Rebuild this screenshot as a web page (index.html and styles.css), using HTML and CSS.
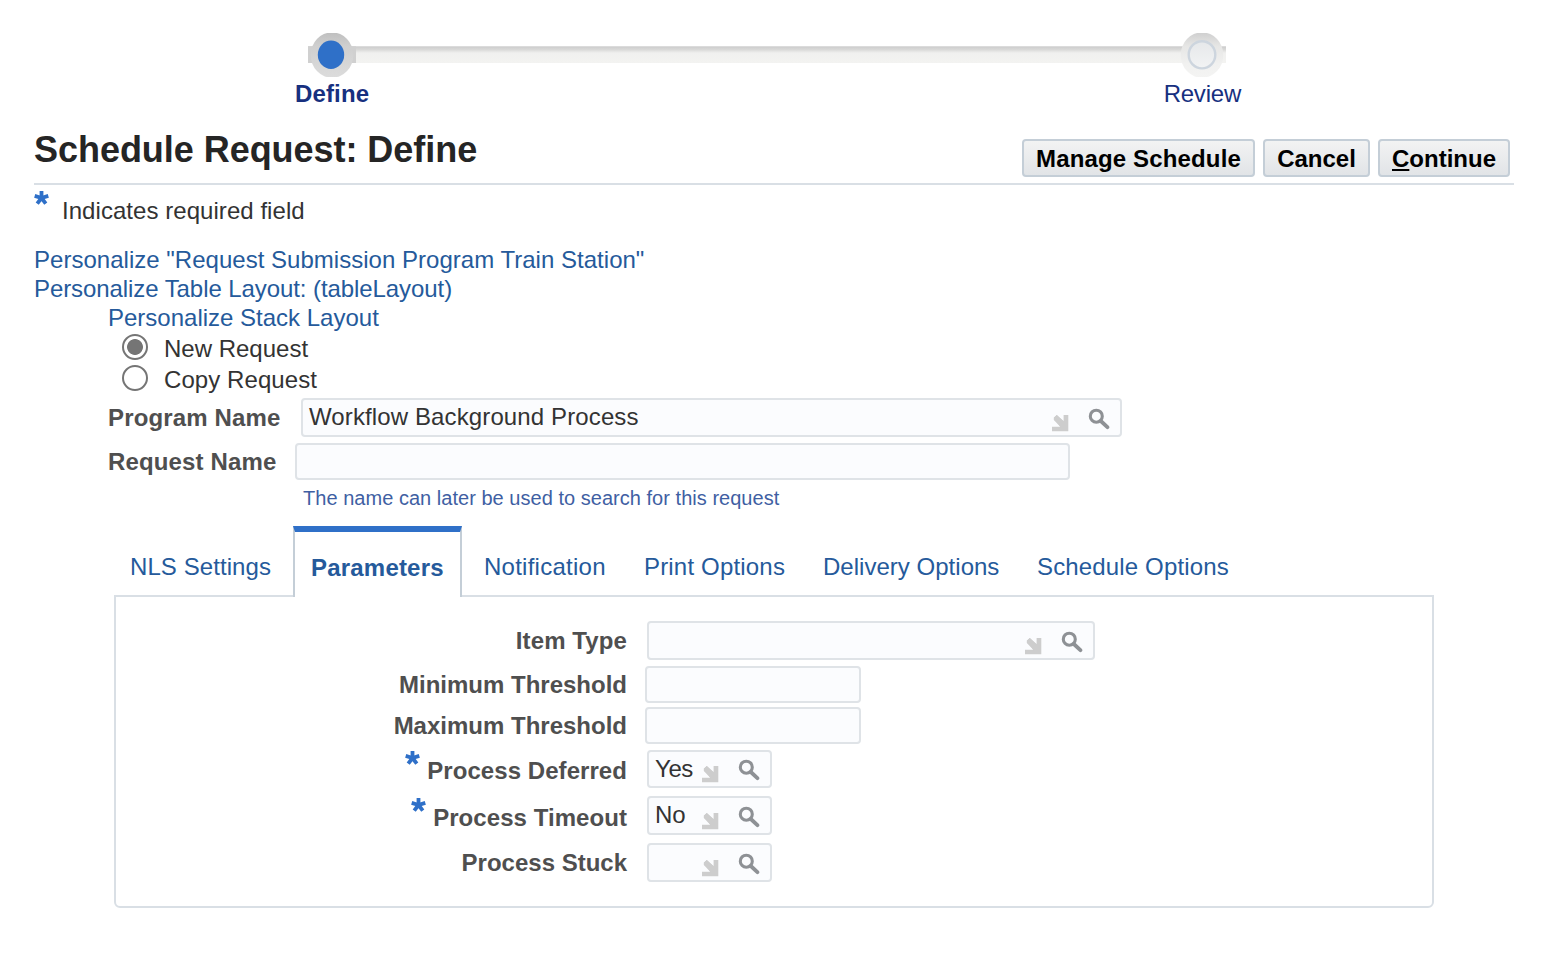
FILE: index.html
```html
<!DOCTYPE html>
<html lang="en">
<head>
<meta charset="utf-8">
<title>Schedule Request: Define</title>
<link rel="stylesheet" href="styles.css">
</head>
<body>
<svg class="defs" width="0" height="0">
  <defs>
    <symbol id="lov" viewBox="0 0 58 24">
      <path d="M1.8 9.8 4.8 6.9 11.6 13V7h4.7v16.3H0v-4.6h8.2Z" fill="#cdcdcd"/>
      <path d="M1.8 9.8 4.8 6.9 13 15v5H9.5L1.8 12Z" fill="#cdcdcd"/>
      <circle cx="44.3" cy="8.2" r="6" fill="none" stroke="#8e9195" stroke-width="3.1"/>
      <path d="M48.8 13 55.4 19.2" stroke="#8e9195" stroke-width="3.8" stroke-linecap="round"/>
    </symbol>
    <symbol id="star" viewBox="0 0 15 15">
      <path d="M7.5 7V0M7.5 7 .7 4.9M7.5 7l6.8-2.1M7.5 7l-4.3 5.7M7.5 7l4.3 5.7" stroke="#2f70c8" stroke-width="3.8"/>
    </symbol>
  </defs>
</svg>
<nav class="train">
  <svg class="track" width="918" height="44" viewBox="0 0 918 44">
    <defs>
      <linearGradient id="bar" x1="0" y1="0" x2="0" y2="1"><stop offset="0" stop-color="#cbcbcb"/><stop offset=".2" stop-color="#d9d9d8"/><stop offset=".4" stop-color="#f0f0ef"/><stop offset="1" stop-color="#f3f3f1"/></linearGradient>
      <linearGradient id="on" x1="0" y1="0" x2="0" y2="1"><stop offset="0" stop-color="#bfbfbf"/><stop offset=".3" stop-color="#cfcfcf"/><stop offset="1" stop-color="#dcdcdc"/></linearGradient>
      <linearGradient id="off" x1="0" y1="0" x2="0" y2="1"><stop offset="0" stop-color="#cfcfcf"/><stop offset=".3" stop-color="#e6e6e5"/><stop offset=".7" stop-color="#f1f1f0"/><stop offset="1" stop-color="#f4f4f3"/></linearGradient>
      <linearGradient id="knob" x1="0" y1="0" x2="0" y2="1"><stop offset="0" stop-color="#e6e8ea"/><stop offset="1" stop-color="#f2f3f4"/></linearGradient>
    </defs>
    <rect x="0" y="13.3" width="918" height="16.7" fill="url(#bar)"/>
    <rect x="0" y="13.3" width="48" height="16.7" fill="#d0d0d0"/>
    <ellipse cx="24" cy="22" rx="21.3" ry="22.6" fill="url(#on)"/>
    <ellipse cx="23" cy="21.8" rx="13.2" ry="14.2" fill="#2f70c8"/>
    <ellipse cx="894" cy="22" rx="21.3" ry="22.6" fill="url(#off)"/>
    <ellipse cx="894" cy="21.8" rx="13.3" ry="13.6" fill="url(#knob)" stroke="#cdd5de" stroke-width="2.4"/>
  </svg>
  <div class="stations"><b>Define</b><span>Review</span></div>
</nav>
<header class="head">
  <h1>Schedule Request: Define</h1>
  <div class="actions">
    <div class="btn manage">Manage Schedule</div>
    <div class="btn cancel">Cancel</div>
    <div class="btn continue"><u>C</u>ontinue</div>
  </div>
</header>
<p class="required"><svg width="15" height="15"><use href="#star"/></svg><span>Indicates required field</span></p>
<div class="links">
  <a>Personalize "Request Submission Program Train Station"</a>
  <a class="table-layout">Personalize Table Layout: (tableLayout)</a>
  <a class="indent">Personalize Stack Layout</a>
</div>
<div class="radios">
  <div class="radio"><i class="dot on"></i><span>New Request</span></div>
  <div class="radio"><i class="dot"></i><span class="copy">Copy Request</span></div>
</div>
<div class="row program"><b class="label">Program Name</b><div class="field"><span>Workflow Background Process</span><svg width="58" height="24"><use href="#lov"/></svg></div></div>
<div class="row request"><b class="label">Request Name</b><div class="field"></div></div>
<p class="hint">The name can later be used to search for this request</p>
<div class="tabs">
  <a class="tab nls">NLS Settings</a>
  <a class="tab active">Parameters</a>
  <a class="tab notification">Notification</a>
  <a class="tab print">Print Options</a>
  <a class="tab delivery">Delivery Options</a>
  <a class="tab schedule">Schedule Options</a>
</div>
<main class="panel">
  <div class="param item"><b class="label">Item Type</b><div class="field"><svg width="58" height="24"><use href="#lov"/></svg></div></div>
  <div class="param minimum"><b class="label">Minimum Threshold</b><div class="field"></div></div>
  <div class="param maximum"><b class="label">Maximum Threshold</b><div class="field"></div></div>
  <div class="param deferred"><b class="label"><svg width="15" height="15"><use href="#star"/></svg>Process Deferred</b><div class="field"><span class="yes">Yes</span><svg width="58" height="24"><use href="#lov"/></svg></div></div>
  <div class="param timeout"><b class="label"><svg width="15" height="15"><use href="#star"/></svg>Process Timeout</b><div class="field"><span>No</span><svg width="58" height="24"><use href="#lov"/></svg></div></div>
  <div class="param stuck"><b class="label">Process Stuck</b><div class="field"><svg width="58" height="24"><use href="#lov"/></svg></div></div>
</main>
</body>
</html>
```
FILE: styles.css
```css
* { box-sizing: border-box; }
body { margin: 0; width: 1548px; height: 976px; overflow: hidden; background: #fff; color: #333; font: 24px/28px "Liberation Sans", Arial, sans-serif; white-space: nowrap; }
p, h1 { margin: 0; }
svg { display: block; flex: none; }
.defs { position: absolute; }

.train { height: 108px; padding: 33px 0 0 308px; }
.stations { display: flex; justify-content: space-between; width: 946px; margin: 3px 0 0 -13px; color: #17307f; }
.stations b { letter-spacing: .15px; }
.stations span { letter-spacing: -.22px; }

.head { display: flex; justify-content: space-between; height: 77px; margin: 0 34px; border-bottom: 2px solid #d9dfe5; }
h1 { padding-top: 22px; font-size: 36px; line-height: 40px; letter-spacing: -.04px; color: #252525; }
.actions { display: flex; gap: 8px; padding: 31px 4px 0 0; }
.btn { height: 38px; padding-top: 4px; border: 2px solid #c4ced7; border-radius: 4px; background: linear-gradient(#f2f3f3, #e1e4e7); color: #000; font-weight: bold; text-align: center; }
.manage { width: 233px; letter-spacing: .15px; }
.cancel { width: 107px; }
.continue { width: 132px; }

.required { display: flex; height: 60px; padding: 6px 0 0 34px; letter-spacing: .05px; }
.required span { padding: 6px 0 0 13px; }
.links { padding-left: 34px; color: #255a9b; }
.links a { display: block; line-height: 29px; letter-spacing: .02px; }
.links .table-layout { letter-spacing: -.08px; }
.links .indent { padding-left: 74px; letter-spacing: 0; }
.radios { padding: 2px 0 0 122px; }
.radio { display: flex; height: 31px; }
.radio span { padding: 1px 0 0 16px; }
.radio .copy { letter-spacing: .08px; }
.dot { width: 26px; height: 26px; border: 2px solid #757575; border-radius: 50%; }
.dot.on { background: radial-gradient(circle, #757575 7.5px, #fff 8.3px); }

.label { color: #4f4f4f; }
.field { display: flex; height: 39px; padding: 3px 0 0 6px; border: 2px solid #dfe3e7; border-radius: 4px; background: #fbfcfe; }
.field svg { margin: 5px 10px 0 auto; }
.row { display: flex; padding-left: 108px; }
.row .label { flex: none; letter-spacing: .15px; }
.program { height: 47px; padding-top: 2px; }
.program .label { width: 193px; padding-top: 6px; }
.program .field { width: 821px; letter-spacing: .12px; }
.request { height: 42px; }
.request .label { width: 187px; padding-top: 5px; }
.request .field { width: 775px; height: 37px; }
.hint { height: 41px; padding-left: 303px; font-size: 20px; line-height: 26px; letter-spacing: .03px; color: #3f5fa3; }

.tabs { display: flex; height: 71px; margin-bottom: -2px; padding-left: 130px; color: #255a9b; }
.tab { padding-top: 27px; }
.nls { width: 163px; letter-spacing: .08px; }
.active { position: relative; width: 169px; padding: 22px 0 0 16px; border: 2px solid #c4ced7; border-top: 6px solid #2f70c8; border-bottom: 0; background: #fff; font-weight: bold; letter-spacing: .2px; }
.notification { width: 182px; padding-left: 22px; letter-spacing: .25px; }
.print { width: 179px; letter-spacing: .18px; }
.delivery { width: 214px; letter-spacing: .02px; }
.schedule { letter-spacing: .15px; }
.panel { display: flex; flex-direction: column; width: 1320px; height: 313px; margin-left: 114px; padding-top: 24px; border: 2px solid #d9dfe5; border-radius: 0 0 6px 6px; }
.param { display: grid; grid-template-columns: 511px auto; justify-content: start; column-gap: 20px; }
.param .label { display: flex; justify-content: flex-end; gap: 7px; padding-top: 6px; }
.param .field { width: 125px; }
.item { height: 45px; }
.item .label { letter-spacing: .1px; }
.item .field { width: 448px; }
.minimum { height: 41px; }
.maximum { height: 43px; }
.minimum, .maximum { column-gap: 18px; }
.minimum .label, .maximum .label { padding-top: 5px; }
.minimum .field, .maximum .field { width: 216px; height: 37px; }
.deferred { height: 46px; }
.deferred .label, .timeout .label { padding-top: 7px; letter-spacing: .06px; }
.deferred .field { height: 38px; }
.deferred .field svg { margin-top: 4px; }
.deferred .label svg { margin-top: -6px; }
.timeout { height: 47px; }
.timeout .label { padding-top: 8px; }
.timeout .label svg { margin-top: -6px; }
.yes { letter-spacing: -.4px; }
```
